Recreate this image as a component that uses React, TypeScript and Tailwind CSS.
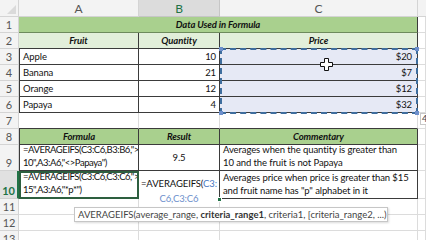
import React from "react";

const font = { fontFamily: "Lato, 'Liberation Sans', sans-serif" };

function RowHead({ n, active }: { n: number; active?: boolean }) {
    return (
        <div
            className={
                active
                    ? "flex items-end justify-center pb-[1px] bg-[#e1e1e1] border-r-2 border-b border-r-[#217346] border-b-[#d0d0d0] text-[#217346] font-bold text-[11px] leading-[13px]"
                    : "flex items-end justify-center pb-[1px] bg-[#f3f3f3] border-r border-b border-[#d4d4d4] text-[#555] text-[11px] leading-[13px]"
            }
        >
            {n}
        </div>
    );
}

function ColHead({ label, active }: { label: string; active?: boolean }) {
    return (
        <div
            className={
                active
                    ? "flex items-center justify-center bg-[#dcdcdc] border-r border-b border-[#c6c6c6] text-[#217346] text-[12px]"
                    : "flex items-center justify-center bg-[#f3f3f3] border-r border-b border-[#d4d4d4] text-[#555] text-[12px]"
            }
        >
            {label}
        </div>
    );
}

function Empty() {
    return <div className="bg-white border-r border-b border-[#dcdcdc]" />;
}

export default function App() {
    return (
        <div className="relative w-[426px] h-[240px] overflow-hidden bg-white text-[#111]" style={font}>
            <div className="grid grid-cols-[19px_120px_81px_198px_8px] grid-rows-[17px_repeat(8,16px)_26px_28px_16px_16px_16px] text-[9.5px] leading-[13px] tracking-[-0.1px]">
                {/* column headers */}
                <div className="relative bg-[#f3f3f3] border-r border-b border-[#d4d4d4]">
                    <svg className="absolute right-[2px] bottom-[2px]" width="9" height="9" viewBox="0 0 9 9">
                        <path d="M9 0 L9 9 L0 9 Z" fill="#dadada" />
                    </svg>
                </div>
                <ColHead label="A" />
                <ColHead label="B" active />
                <ColHead label="C" />
                <div className="bg-[#f3f3f3] border-b border-[#d4d4d4]" />

                {/* row 1 */}
                <RowHead n={1} />
                <div className="col-span-3 flex items-center justify-center bg-[#a9d08e] border-r border-b border-r-[#3b3b3b] border-b-[#6d8a5c] font-bold italic">
                    Data Used in Formula
                </div>
                <Empty />

                {/* row 2 */}
                <RowHead n={2} />
                <div className="flex items-center justify-center bg-[#e2efda] border-r border-b border-[#3b3b3b] font-bold italic">Fruit</div>
                <div className="flex items-center justify-center bg-[#e2efda] border-r border-b border-[#3b3b3b] font-bold italic">Quantity</div>
                <div className="flex items-center justify-center bg-[#e2efda] border-r border-b border-[#3b3b3b] font-bold italic">Price</div>
                <Empty />

                {/* rows 3-6 */}
                {[
                    ["Apple", "10", "$20"],
                    ["Banana", "21", "$7"],
                    ["Orange", "12", "$12"],
                    ["Papaya", "4", "$32"],
                ].map(([fruit, qty, price], i) => (
                    <React.Fragment key={fruit}>
                        <RowHead n={i + 3} />
                        <div className="flex items-center pl-[3px] border-l border-r border-b border-[#3b3b3b]">{fruit}</div>
                        <div className="flex items-center justify-end pr-[3px] border-r border-b border-[#3b3b3b]">{qty}</div>
                        <div className="flex items-center justify-end pr-[5px] border-r border-b border-[#3b3b3b] bg-[#e6e9f5]">{price}</div>
                        <Empty />
                    </React.Fragment>
                ))}

                {/* row 7 */}
                <RowHead n={7} />
                <div className="border-r border-b border-r-[#dcdcdc] border-b-[#3b3b3b]" />
                <div className="border-r border-b border-r-[#dcdcdc] border-b-[#3b3b3b]" />
                <div className="border-r border-b border-r-[#dcdcdc] border-b-[#3b3b3b]" />
                <Empty />

                {/* row 8 */}
                <RowHead n={8} />
                <div className="flex items-center justify-center bg-[#a9d08e] border-l border-r border-b border-[#3b3b3b] font-bold italic">Formula</div>
                <div className="flex items-center justify-center bg-[#a9d08e] border-r border-b border-[#3b3b3b] font-bold italic">Result</div>
                <div className="flex items-center justify-center bg-[#a9d08e] border-r border-b border-[#3b3b3b] font-bold italic">Commentary</div>
                <Empty />

                {/* row 9 */}
                <RowHead n={9} />
                <div className="flex flex-col justify-end pb-[1px] pl-[3px] border-l border-r border-b border-[#3b3b3b] whitespace-nowrap tracking-[-0.45px] overflow-hidden">
                    <span>=AVERAGEIFS(C3:C6,B3:B6,"&gt;</span>
                    <span>10",A3:A6,"&lt;&gt;Papaya")</span>
                </div>
                <div className="flex items-center justify-center border-r border-b border-[#3b3b3b]">9.5</div>
                <div className="flex flex-col justify-end pb-[1px] pl-[3px] border-r border-b border-[#3b3b3b] whitespace-nowrap">
                    <span>Averages when the quantity is greater than</span>
                    <span>10 and the fruit is not Papaya</span>
                </div>
                <Empty />

                {/* row 10 */}
                <RowHead n={10} active />
                <div className="flex flex-col justify-end pb-[1px] pl-[2px] border-2 border-[#2d5f3f] whitespace-nowrap tracking-[-0.45px] overflow-hidden">
                    <span>=AVERAGEIFS(C3:C6,C3:C6,"&gt;</span>
                    <span>15",A3:A6,"*p*")</span>
                </div>
                <div className="relative border-r border-r-[#3b3b3b]">
                    <div className="absolute left-0 right-0 top-[2px] h-[36px] z-20 bg-white flex flex-col items-center pt-[3px] leading-[15px] whitespace-nowrap">
                        <span>
                            =AVERAGEIFS(<span className="text-[#4a78c2]">C3:</span>
                        </span>
                        <span className="text-[#6d8fcc]">C6,C3:C6</span>
                    </div>
                    <div className="absolute right-[-3px] bottom-[-3px] w-[5px] h-[5px] z-30 bg-[#217346] border border-white" />
                </div>
                <div className="flex flex-col justify-end pb-[1px] pl-[3px] border-r border-b border-[#3b3b3b] whitespace-nowrap">
                    <span>Averages price when price is greater than $15</span>
                    <span>and fruit name has "p" alphabet in it</span>
                </div>
                <Empty />

                {/* rows 11-13 */}
                {[11, 12, 13].map((n) => (
                    <React.Fragment key={n}>
                        <RowHead n={n} />
                        <Empty />
                        <Empty />
                        <Empty />
                        <Empty />
                    </React.Fragment>
                ))}
            </div>

            {/* copy range C3:C6 marching ants */}
            <div className="absolute left-[220px] top-[48px] w-[198px] h-[66px] z-10 pointer-events-none border-2 border-dashed border-[#3f6e9e]">
                <div className="absolute -left-[3px] -top-[3px] w-[4px] h-[4px] bg-[#6d8fcc]" />
                <div className="absolute -right-[3px] -top-[3px] w-[4px] h-[4px] bg-[#6d8fcc]" />
                <div className="absolute -left-[3px] -bottom-[3px] w-[4px] h-[4px] bg-[#6d8fcc]" />
                <div className="absolute -right-[3px] -bottom-[3px] w-[4px] h-[4px] bg-[#6d8fcc]" />
            </div>

            {/* mouse cursor */}
            <svg className="absolute left-[320px] top-[58px] z-30" width="13" height="13" viewBox="0 0 13 13">
                <path d="M4.5 0.5 H8.5 V4.5 H12.5 V8.5 H8.5 V12.5 H4.5 V8.5 H0.5 V4.5 H4.5 Z" fill="#fff" stroke="#111" strokeWidth="1" />
            </svg>

            {/* small box at right edge */}
            <div className="absolute left-[420px] top-[113px] w-[12px] h-[12px] bg-white border border-[#c8c8c8] text-[9px] leading-[10px] pl-[1px] text-[#444]">
                4
            </div>

            {/* function tooltip */}
            <div className="absolute left-[74px] top-[207px] w-[314px] h-[15px] z-30 bg-white border border-[#c6c6c6] shadow-[1px_1px_2px_rgba(0,0,0,0.15)] text-[9.5px] leading-[13px] text-[#444] pl-[3px] whitespace-nowrap">
                AVERAGEIFS(average_range, <span className="font-bold text-[#333]">criteria_range1</span>, criteria1, [criteria_range2, ...)
            </div>
        </div>
    );
}
